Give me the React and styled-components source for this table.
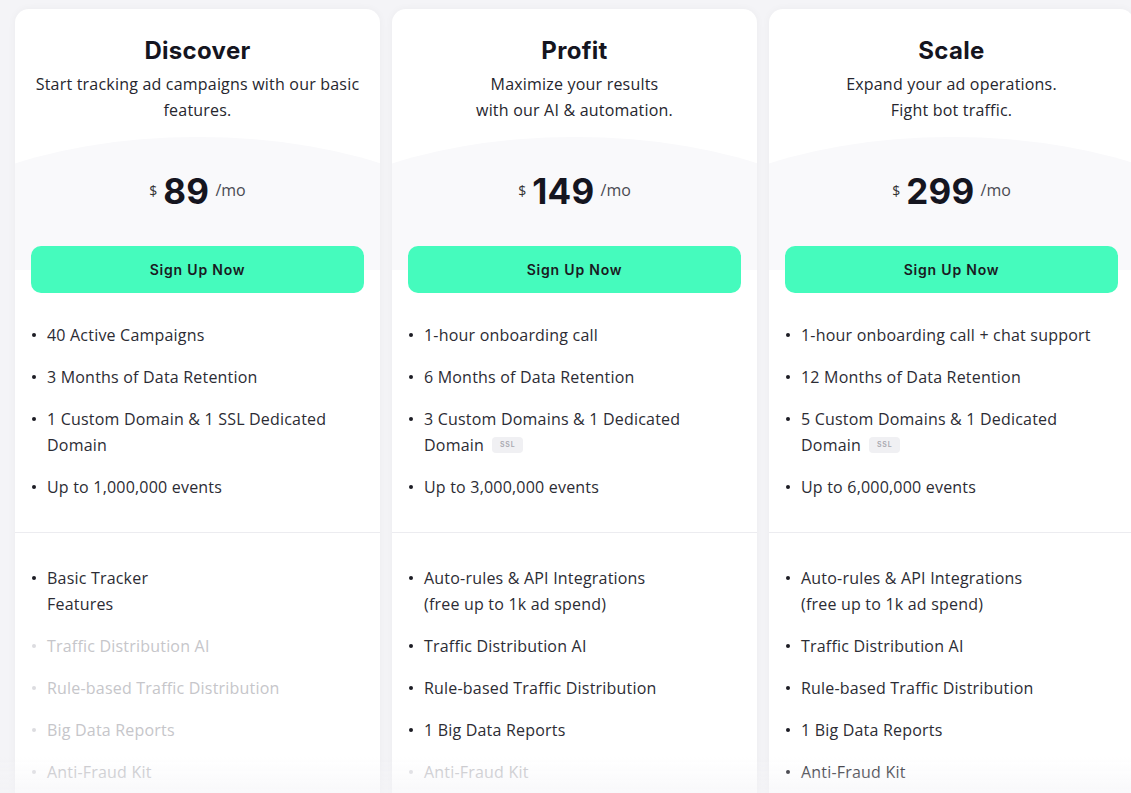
import React from 'react';
import styled, { createGlobalStyle } from 'styled-components';

const plans = [
  {
    name: 'Discover',
    desc: ['Start tracking ad campaigns with our basic features.'],
    price: '89',
    main: [
      { text: ['40 Active Campaigns'] },
      { text: ['3 Months of Data Retention'] },
      { text: ['1 Custom Domain & 1 SSL Dedicated Domain'] },
      { text: ['Up to 1,000,000 events'] },
    ],
    extra: [
      { text: ['Basic Tracker', 'Features'] },
      { text: ['Traffic Distribution AI'], off: true },
      { text: ['Rule-based Traffic Distribution'], off: true },
      { text: ['Big Data Reports'], off: true },
      { text: ['Anti-Fraud Kit'], off: true },
    ],
  },
  {
    name: 'Profit',
    desc: ['Maximize your results', 'with our AI & automation.'],
    price: '149',
    main: [
      { text: ['1-hour onboarding call'] },
      { text: ['6 Months of Data Retention'] },
      { text: ['3 Custom Domains & 1 Dedicated', 'Domain'], ssl: true },
      { text: ['Up to 3,000,000 events'] },
    ],
    extra: [
      { text: ['Auto-rules & API Integrations', '(free up to 1k ad spend)'] },
      { text: ['Traffic Distribution AI'] },
      { text: ['Rule-based Traffic Distribution'] },
      { text: ['1 Big Data Reports'] },
      { text: ['Anti-Fraud Kit'], off: true },
    ],
  },
  {
    name: 'Scale',
    desc: ['Expand your ad operations.', 'Fight bot traffic.'],
    price: '299',
    main: [
      { text: ['1-hour onboarding call + chat support'] },
      { text: ['12 Months of Data Retention'] },
      { text: ['5 Custom Domains & 1 Dedicated', 'Domain'], ssl: true },
      { text: ['Up to 6,000,000 events'] },
    ],
    extra: [
      { text: ['Auto-rules & API Integrations', '(free up to 1k ad spend)'] },
      { text: ['Traffic Distribution AI'] },
      { text: ['Rule-based Traffic Distribution'] },
      { text: ['1 Big Data Reports'] },
      { text: ['Anti-Fraud Kit'] },
    ],
  },
];

const Lines = ({ lines }) =>
  lines.map((l, i) => (
    <React.Fragment key={i}>
      {i > 0 && <br />}
      {l}
    </React.Fragment>
  ));

function Plan({ plan }) {
  return (
    <Card>
      <Head>
        <Title>{plan.name}</Title>
        <Desc><Lines lines={plan.desc} /></Desc>
      </Head>
      <PriceZone>
        <Backdrop />
        <PriceRow>
          <Currency>$</Currency>
          <Amount>{plan.price}</Amount>
          <Period>/mo</Period>
        </PriceRow>
        <SignUp>Sign Up Now</SignUp>
      </PriceZone>
      <List>
        {plan.main.map((item, i) => (
          <Item key={i}>
            <Lines lines={item.text} />
            {item.ssl && <Badge>SSL</Badge>}
          </Item>
        ))}
      </List>
      <Divider />
      <List $second>
        {plan.extra.map((item, i) => (
          <Item key={i} $off={item.off}>
            <Lines lines={item.text} />
          </Item>
        ))}
      </List>
    </Card>
  );
}

export default function App() {
  return (
    <>
      <GlobalStyle />
      <Page>
        {plans.map((p) => (
          <Plan key={p.name} plan={p} />
        ))}
      </Page>
      <Fade />
    </>
  );
}

const GlobalStyle = createGlobalStyle`
  html, body {
    margin: 0;
    padding: 0;
    background: #f4f4f7;
    overflow: hidden;
  }
  * { box-sizing: border-box; }
`;

const Page = styled.div`
  display: flex;
  gap: 12px;
  padding: 9px 0 0 15px;
  width: 1200px;
  height: 793px;
  align-items: flex-start;
`;

const Card = styled.div`
  flex: 0 0 365px;
  background: #fff;
  border-radius: 14px;
  box-shadow: 0 0 8px rgba(30, 30, 60, 0.04);
  overflow: hidden;
  padding-bottom: 60px;
`;

const Head = styled.div`
  padding: 26px 16px 0;
  text-align: center;
`;

const Title = styled.h2`
  margin: 0;
  font-family: Inter, "Liberation Sans", sans-serif;
  font-weight: 700;
  font-size: 24px;
  line-height: 32px;
  color: #15151f;
  letter-spacing: 0.3px;
`;

const Desc = styled.p`
  margin: 4px 0 0;
  font-family: "Open Sans", sans-serif;
  font-size: 16px;
  line-height: 26px;
  letter-spacing: 0.2px;
  color: #26262e;
`;

const PriceZone = styled.div`
  position: relative;
  margin-top: 14px;
  padding: 31px 16px 0;
`;

const Backdrop = styled.div`
  position: absolute;
  top: 0;
  left: 0;
  right: 0;
  height: 133px;
  overflow: hidden;

  &::before {
    content: '';
    position: absolute;
    top: 0;
    left: 50%;
    width: 584px;
    height: 240px;
    transform: translateX(-50%);
    border-radius: 50%;
    background: #f9f9fb;
  }
`;

const PriceRow = styled.div`
  position: relative;
  display: flex;
  justify-content: center;
  align-items: center;
  gap: 6px;
  height: 46px;
`;

const Currency = styled.span`
  font-family: "Open Sans", sans-serif;
  font-size: 14px;
  color: #333;
  margin-top: -2px;
`;

const Amount = styled.span`
  font-family: Inter, "Liberation Sans", sans-serif;
  font-weight: 700;
  font-size: 35px;
  color: #15151f;
  letter-spacing: 0.3px;
`;

const Period = styled.span`
  font-family: "Open Sans", sans-serif;
  font-size: 16px;
  color: #4a4a52;
  margin-top: -2px;
`;

const SignUp = styled.button`
  position: relative;
  display: block;
  width: 100%;
  height: 47px;
  margin-top: 32px;
  border: none;
  border-radius: 10px;
  background: #45fbbd;
  font-family: Inter, "Liberation Sans", sans-serif;
  font-weight: 600;
  font-size: 14px;
  letter-spacing: 0.8px;
  color: #1a1a22;
  cursor: pointer;
`;

const List = styled.ul`
  list-style: none;
  margin: 0;
  padding: ${(p) => (p.$second ? '32px 20px 0 32px' : '29px 20px 32px 32px')};
  display: flex;
  flex-direction: column;
  gap: 16px;
`;

const Item = styled.li`
  position: relative;
  font-family: "Open Sans", sans-serif;
  font-size: 16px;
  line-height: 26px;
  letter-spacing: 0.2px;
  color: ${(p) => (p.$off ? '#c6c6ca' : '#2c2c34')};

  &::before {
    content: '';
    position: absolute;
    left: -15px;
    top: 11px;
    width: 4px;
    height: 4px;
    border-radius: 50%;
    background: ${(p) => (p.$off ? '#dcdce0' : '#1c1c24')};
  }
`;

const Badge = styled.span`
  display: inline-block;
  vertical-align: middle;
  margin: -3px 0 0 8px;
  padding: 0 8px;
  height: 16px;
  line-height: 16px;
  border-radius: 4px;
  background: #f0f0f3;
  font-family: Inter, sans-serif;
  font-size: 7px;
  font-weight: 600;
  letter-spacing: 0.8px;
  color: #a8a8b0;
`;

const Divider = styled.div`
  height: 1px;
  background: #ececf0;
`;

const Fade = styled.div`
  position: fixed;
  left: 0;
  right: 0;
  bottom: 0;
  height: 36px;
  background: linear-gradient(rgba(244, 244, 247, 0), rgba(244, 244, 247, 0.55));
  pointer-events: none;
`;
